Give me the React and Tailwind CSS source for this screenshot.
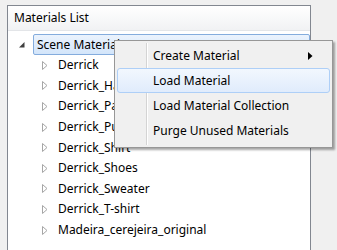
import { useState } from "react";

const items = [
  "Derrick",
  "Derrick_Hair",
  "Derrick_Pants",
  "Derrick_Pupil",
  "Derrick_Shirt",
  "Derrick_Shoes",
  "Derrick_Sweater",
  "Derrick_T-shirt",
  "Madeira_cerejeira_original",
];

const menu = ["Create Material", "Load Material", "Load Material Collection", "Purge Unused Materials"];

function Arrow() {
  return (
    <svg width="8" height="9" viewBox="0 0 8 9" className="shrink-0">
      <path d="M1.5 0.5 L6 4.5 L1.5 8.5 Z" fill="#fff" stroke="#a6a6a6" />
    </svg>
  );
}

function App() {
  const [hover] = useState(1);
  return (
    <div
      className="relative w-[337px] h-[250px] bg-[#f0f0f0] overflow-hidden text-[12px] text-black pl-[7px] pt-[5px]"
      style={{ fontFamily: '"Noto Sans", sans-serif' }}
    >
      <div className="w-[304px] h-[260px] border border-[#828790] bg-white">
        <div className="h-[25px] flex items-center pl-[6px] bg-gradient-to-b from-white to-[#f1f2f4] border-b border-[#e3e5e8]">
          Materials List
        </div>
        <div className="pt-[3px] flex flex-col">
          <div className="flex items-center h-[21px]">
            <svg width="8" height="8" viewBox="0 0 8 8" className="ml-[10px] mr-[7px]">
              <path d="M6.5 1 L6.5 6.5 L1 6.5 Z" fill="#404040" />
            </svg>
            <div className="flex items-center h-[21px] flex-1 rounded-[2px] border border-[#84acdd] bg-gradient-to-b from-[#ebf3fd] to-[#d3e5fa] pl-[3px]">
              Scene Materials
            </div>
          </div>
          {items.map((t) => (
            <div key={t} className="flex items-center gap-[9px] h-[20.6px] pl-[33px]">
              <Arrow />
              <span>{t}</span>
            </div>
          ))}
        </div>
      </div>

      <div className="absolute left-[114px] top-[40px] w-[219px] h-[108px] border border-[#979797] bg-[#f0f0f0] shadow-[2px_2px_2px_rgba(0,0,0,0.35)] p-[2px] flex">
        <div className="w-[29px] shrink-0" />
        <div className="w-[2px] shrink-0 border-l border-[#d4d4d4] bg-white" />
        <div className="flex-1 flex flex-col -ml-[31px]">
          {menu.map((m, i) => (
            <div
              key={m}
              className={
                "relative flex items-center h-[25px] pl-[35px] rounded-[3px] border " +
                (i === hover
                  ? "border-[#aecff7] bg-gradient-to-b from-[#f2f7fe] to-[#e0ecfc]"
                  : "border-transparent")
              }
            >
              {m}
              {i === 0 && (
                <svg width="5" height="8" viewBox="0 0 5 8" className="absolute right-[16px]">
                  <path d="M0 0 L4.5 4 L0 8 Z" fill="#000" />
                </svg>
              )}
            </div>
          ))}
        </div>
      </div>
    </div>
  );
}

export default App;
